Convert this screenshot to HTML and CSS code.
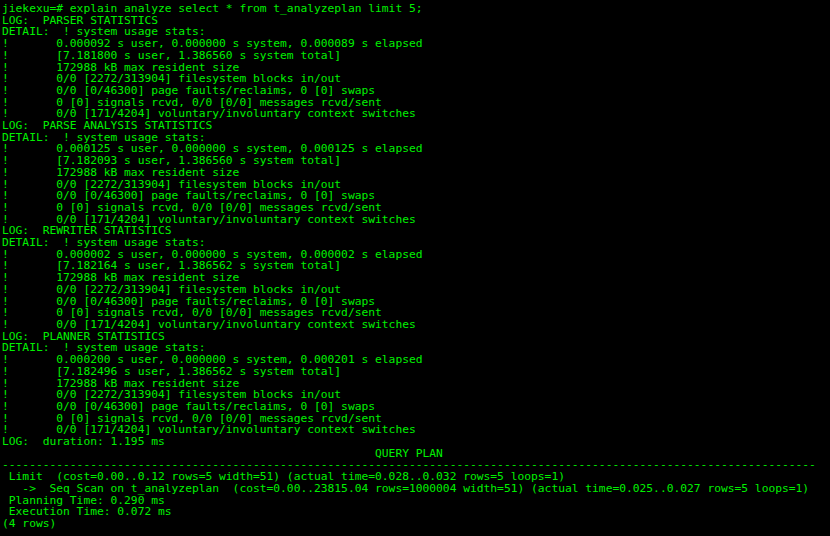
FILE: index.html
```html
<!DOCTYPE html>
<html>
<head>
<meta charset="utf-8">
<link rel="stylesheet" href="styles.css">
</head>
<body>
<pre class="term">jiekexu=# explain analyze select * from t_analyzeplan limit 5;
LOG:  PARSER STATISTICS
DETAIL:  ! system usage stats:
!       0.000092 s user, 0.000000 s system, 0.000089 s elapsed
!       [7.181800 s user, 1.386560 s system total]
!       172988 kB max resident size
!       0/0 [2272/313904] filesystem blocks in/out
!       0/0 [0/46300] page faults/reclaims, 0 [0] swaps
!       0 [0] signals rcvd, 0/0 [0/0] messages rcvd/sent
!       0/0 [171/4204] voluntary/involuntary context switches
LOG:  PARSE ANALYSIS STATISTICS
DETAIL:  ! system usage stats:
!       0.000125 s user, 0.000000 s system, 0.000125 s elapsed
!       [7.182093 s user, 1.386560 s system total]
!       172988 kB max resident size
!       0/0 [2272/313904] filesystem blocks in/out
!       0/0 [0/46300] page faults/reclaims, 0 [0] swaps
!       0 [0] signals rcvd, 0/0 [0/0] messages rcvd/sent
!       0/0 [171/4204] voluntary/involuntary context switches
LOG:  REWRITER STATISTICS
DETAIL:  ! system usage stats:
!       0.000002 s user, 0.000000 s system, 0.000002 s elapsed
!       [7.182164 s user, 1.386562 s system total]
!       172988 kB max resident size
!       0/0 [2272/313904] filesystem blocks in/out
!       0/0 [0/46300] page faults/reclaims, 0 [0] swaps
!       0 [0] signals rcvd, 0/0 [0/0] messages rcvd/sent
!       0/0 [171/4204] voluntary/involuntary context switches
LOG:  PLANNER STATISTICS
DETAIL:  ! system usage stats:
!       0.000200 s user, 0.000000 s system, 0.000201 s elapsed
!       [7.182496 s user, 1.386562 s system total]
!       172988 kB max resident size
!       0/0 [2272/313904] filesystem blocks in/out
!       0/0 [0/46300] page faults/reclaims, 0 [0] swaps
!       0 [0] signals rcvd, 0/0 [0/0] messages rcvd/sent
!       0/0 [171/4204] voluntary/involuntary context switches
LOG:  duration: 1.195 ms
                                                       QUERY PLAN
------------------------------------------------------------------------------------------------------------------------
 Limit  (cost=0.00..0.12 rows=5 width=51) (actual time=0.028..0.032 rows=5 loops=1)
   ->  Seq Scan on t_analyzeplan  (cost=0.00..23815.04 rows=1000004 width=51) (actual time=0.025..0.027 rows=5 loops=1)
 Planning Time: 0.290 ms
 Execution Time: 0.072 ms
(4 rows)</pre>
</body>
</html>
```

FILE: styles.css
```css
html, body {
  margin: 0;
  padding: 0;
  background: #000;
  height: 100%;
  overflow: hidden;
}
.term {
  margin: 0;
  padding: 3px 0 0 2px;
  font-family: "DejaVu Sans Mono", "Liberation Mono", monospace;
  font-size: 11.27px;
  line-height: 11.7px;
  color: #00f000;
  white-space: pre;
}
```
